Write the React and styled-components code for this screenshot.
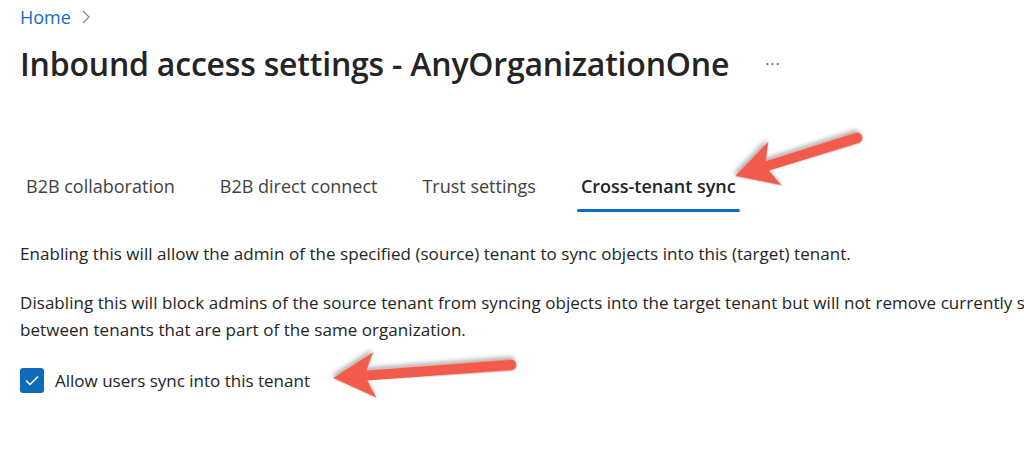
import React from "react";
import styled, { createGlobalStyle } from "styled-components";

const Global = createGlobalStyle`
  html, body { margin: 0; padding: 0; background: #ffffff; }
  body { font-family: "Open Sans", "Noto Sans", sans-serif; color: #242424; }
`;

const Page = styled.div`
  position: relative;
  width: 1024px;
  height: 454px;
  overflow: hidden;
  background: #fff;
  padding: 4px 0 0 20px;
  box-sizing: border-box;
`;

const Breadcrumb = styled.nav`
  display: flex;
  align-items: center;
  gap: 10px;
  height: 26px;
`;

const Crumb = styled.a`
  color: #0f6cbd;
  font-size: 18px;
  text-decoration: none;
`;

const TitleRow = styled.div`
  display: flex;
  align-items: center;
  margin-top: 7px;
  height: 52px;
`;

const Title = styled.h1`
  margin: 0;
  font-size: 32px;
  font-weight: 600;
  color: #242424;
  letter-spacing: -0.2px;
  white-space: nowrap;
`;

const More = styled.span`
  margin-left: 36px;
  font-size: 16px;
  color: #616161;
  letter-spacing: 1px;
  position: relative;
  top: 1px;
`;

const Tabs = styled.div`
  display: flex;
  margin-top: 79px;
  margin-left: 2px;
  gap: 37px;
`;

const Tab = styled.div`
  position: relative;
  padding: 6px 4px 14px;
  font-size: 18px;
  font-weight: ${(p) => (p.$active ? 600 : 400)};
  color: ${(p) => (p.$active ? "#242424" : "#424242")};
  white-space: nowrap;
  &::after {
    content: "";
    position: absolute;
    left: 0;
    right: 0;
    bottom: 0;
    height: 3px;
    border-radius: 2px;
    background: ${(p) => (p.$active ? "#0f6cbd" : "transparent")};
  }
`;

const Content = styled.div`
  display: flex;
  flex-direction: column;
  gap: 22px;
  margin-top: 28px;
  overflow: hidden;
`;

const Paragraph = styled.p`
  margin: 0;
  font-size: 17px;
  line-height: 27px;
  letter-spacing: 0.05px;
  color: #242424;
  white-space: nowrap;
`;

const CheckRow = styled.label`
  display: flex;
  align-items: center;
  gap: 11px;
  margin-top: 25px;
  font-size: 17px;
  color: #242424;
`;

const Box = styled.span`
  width: 24px;
  height: 25px;
  border-radius: 3px;
  background: #0f6cbd;
  display: flex;
  align-items: center;
  justify-content: center;
`;

const Arrow = styled.svg`
  position: absolute;
  overflow: visible;
  pointer-events: none;
`;

function RedArrow({ x1, y1, x2, y2, id }) {
  const dx = x2 - x1;
  const dy = y2 - y1;
  const len = Math.hypot(dx, dy);
  const ang = (Math.atan2(dy, dx) * 180) / Math.PI;
  const minX = Math.min(x1, x2) - 30;
  const minY = Math.min(y1, y2) - 30;
  const w = Math.abs(dx) + 60;
  const h = Math.abs(dy) + 60;
  const headLen = 42;
  const headW = 23;
  return (
    <Arrow
      width={w}
      height={h}
      style={{ left: minX, top: minY }}
      viewBox={`${minX} ${minY} ${w} ${h}`}
    >
      <defs>
        <filter id={id} x="-20%" y="-50%" width="140%" height="200%">
          <feDropShadow dx="1" dy="3" stdDeviation="2" floodColor="#000" floodOpacity="0.3" />
        </filter>
      </defs>
      <g transform={`translate(${x1} ${y1}) rotate(${ang})`} filter={`url(#${id})`}>
        <path
          d={`M0 -5.5 L${len - headLen + 8} -5 L${len - headLen} -${headW} L${len} 0 L${len - headLen} ${headW} L${len - headLen + 8} 5 L0 5.5 A5.5 5.5 0 0 1 0 -5.5 Z`}
          fill="#f25a4c"
        />
      </g>
    </Arrow>
  );
}

export default function App() {
  return (
    <>
      <Global />
      <Page>
        <Breadcrumb>
          <Crumb href="#">Home</Crumb>
          <svg width="10" height="14" viewBox="0 0 10 14">
            <path d="M2 1 L8 7 L2 13" fill="none" stroke="#8a8886" strokeWidth="1.2" />
          </svg>
        </Breadcrumb>
        <TitleRow>
          <Title>Inbound access settings - AnyOrganizationOne</Title>
          <More>···</More>
        </TitleRow>
        <Tabs>
          <Tab>B2B collaboration</Tab>
          <Tab>B2B direct connect</Tab>
          <Tab>Trust settings</Tab>
          <Tab $active>Cross-tenant sync</Tab>
        </Tabs>
        <Content>
          <Paragraph>
            Enabling this will allow the admin of the specified (source) tenant to sync objects into this (target) tenant.
          </Paragraph>
          <Paragraph>
            Disabling this will block admins of the source tenant from syncing objects into the target tenant but will not remove currently synced objects
            <br />
            between tenants that are part of the same organization.
          </Paragraph>
        </Content>
        <CheckRow>
          <Box>
            <svg width="14" height="11" viewBox="0 0 14 11">
              <path d="M1 5.5 L5 9.5 L13 1.5" fill="none" stroke="#fff" strokeWidth="1.4" />
            </svg>
          </Box>
          Allow users sync into this tenant
        </CheckRow>
        <RedArrow id="a1" x1={857} y1={138} x2={735} y2={176} />
        <RedArrow id="a2" x1={511} y1={365} x2={333} y2={378} />
      </Page>
    </>
  );
}
